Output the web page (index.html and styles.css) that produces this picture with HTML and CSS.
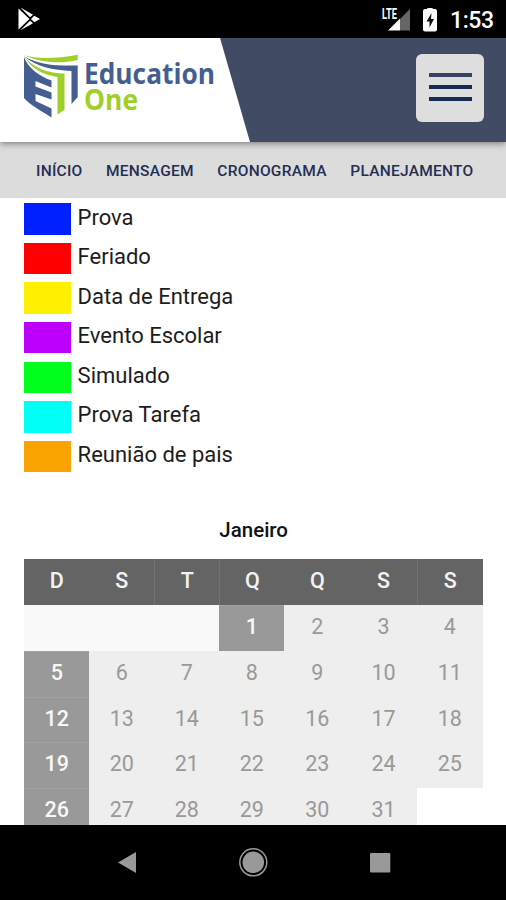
FILE: index.html
```html
<!DOCTYPE html>
<html lang="pt-BR">
<head>
<meta charset="utf-8">
<title>Education One</title>
<link rel="stylesheet" href="styles.css">
</head>
<body>
<div class="screen">
  <div class="status">
    <svg class="play" width="22" height="24" viewBox="0 0 22 24"><path d="M0.5 1.5V22.5L11.5 12ZM2.5 0.5L12 10.3L15 7.8ZM2.5 23.2L12 13.7L15 16.2ZM13 12L16.3 8.7L22 12L16.3 15.3Z" fill="#fff"/></svg>
    <svg class="signals" width="60" height="28" viewBox="0 0 60 28">
      <text class="lte" x="1" y="13" textLength="15" lengthAdjust="spacingAndGlyphs">LTE</text>
      <path d="M29 3V24.500H19V13Z" fill="#666"/><path d="M19 12.500V24.500H7Z" fill="#fff"/>
      <path d="M46 3Q46 2 47.3 2H50.7Q52 2 52 3H54Q56 3 56 5V23.500Q56 25.500 54 25.500H44Q42 25.500 42 23.500V5Q42 3 44 3Z" fill="#fff"/>
      <path d="M50.5 7L45.5 15.5H48.5V21.5L53 13H50Z" fill="#111"/>
    </svg>
    <span class="clock">1:53</span>
  </div>
  <header class="header">
    <svg class="brand" width="250" height="104" viewBox="0 38 250 104">
      <path d="M0 38H220L250 142H0Z" fill="#fff"/>
      <path d="M24 55C35 59 55 59 77.7 54.7V60C61 64 40 63 24 55Z" fill="#a0cf2c"/>
      <path d="M24 56C38 65 57 66 77.7 65.5V97L71.5 104V71C53 70 36 67 24 56Z" fill="#455e91"/>
      <path d="M24 56C34 69 49 73 64.5 73.5V110L57.5 114.5V77C44 75 31 69 24 56Z" fill="#a0cf2c"/>
      <path d="M24 57C28 68 39 76 51.5 80.5V87.5L35.5 81V86.5L51.5 92.5V99.500L35.5 94V101L51.5 108.5V117.5C40 110 30 105 24 98Z" fill="#455e91"/>
      <text class="word blue" x="84" y="83.7" textLength="131" lengthAdjust="spacingAndGlyphs">Education</text>
      <text class="word green" x="84" y="109.5" textLength="54" lengthAdjust="spacingAndGlyphs">One</text>
    </svg>
    <div class="menu"><i></i><i></i><i></i></div>
  </header>
  <nav class="tabs"><span>INÍCIO</span><span>MENSAGEM</span><span>CRONOGRAMA</span><span>PLANEJAMENTO</span></nav>
  <main class="content">
    <ul class="legend">
      <li><i class="c1"></i>Prova</li>
      <li><i class="c2"></i>Feriado</li>
      <li><i class="c3"></i>Data de Entrega</li>
      <li><i class="c4"></i>Evento Escolar</li>
      <li><i class="c5"></i>Simulado</li>
      <li><i class="c6"></i>Prova Tarefa</li>
      <li><i class="c7"></i>Reunião de pais</li>
    </ul>
    <h2>Janeiro</h2>
    <div class="calendar">
      <b class="head">D</b><b class="head">S</b><b class="head line">T</b><b class="head line">Q</b><b class="head">Q</b><b class="head">S</b><b class="head line">S</b>
      <span class="blank"></span><b class="off">1</b><span>2</span><span>3</span><span>4</span>
      <b class="off">5</b><span>6</span><span>7</span><span>8</span><span>9</span><span>10</span><span>11</span>
      <b class="off">12</b><span>13</span><span>14</span><span>15</span><span>16</span><span>17</span><span>18</span>
      <b class="off">19</b><span>20</span><span>21</span><span>22</span><span>23</span><span>24</span><span>25</span>
      <b class="off">26</b><span>27</span><span>28</span><span>29</span><span>30</span><span>31</span>
    </div>
  </main>
  <footer class="navbar">
    <svg width="506" height="75" viewBox="0 825 506 75">
      <path d="M118 862.5L136 852V873Z" fill="#999"/>
      <circle cx="253.300" cy="862.300" r="13.500" fill="none" stroke="#999" stroke-width="1.500"/><circle cx="253.300" cy="862.300" r="10.800" fill="#999"/>
      <rect x="370" y="853" width="20.300" height="19.500" rx="1" fill="#999"/>
    </svg>
  </footer>
</div>
</body>
</html>
```
FILE: styles.css
```css
* { box-sizing: border-box; }
body { margin: 0; font-family: Roboto, sans-serif; background: #fff; }
svg { display: block; }
.screen { width: 506px; height: 900px; display: flex; flex-direction: column; overflow: hidden; }
.status { height: 38px; flex: none; background: #000; display: flex; align-items: center; padding: 0 12px 0 18px; }
.signals { margin-left: auto; margin-top: 2px; }
.lte { font: bold 14px Roboto, sans-serif; fill: #fff; }
.clock { width: 44px; margin-left: 9px; margin-top: 3px; color: #fff; font-size: 23px; font-weight: 500; white-space: nowrap; letter-spacing: -0.4px; }
.header { height: 104px; flex: none; background: #414b63; display: flex; justify-content: space-between; position: relative; box-shadow: 0 1px 7px rgba(0, 0, 0, .5); }
.word { font: bold 29px "Open Sans", sans-serif; }
.blue { fill: #455e91; }
.green { fill: #a0cf2c; }
.menu { width: 68px; height: 68px; margin: 15.500px 22px 0 0; border-radius: 6px; background: #dedede; display: flex; flex-direction: column; align-items: center; gap: 8px; padding-top: 19px; }
.menu i { width: 43px; height: 4px; background: #152b52; }
.menu i:first-child { background: #374260; }
.tabs { height: 55.500px; flex: none; background: #dcdcdc; display: flex; gap: 23.500px; padding: 19px 0 0 36px; color: #252e52; font-size: 15.500px; line-height: 20px; font-weight: 500; letter-spacing: .26px; white-space: nowrap; }
.content { flex: 1; min-height: 0; overflow: hidden; padding: 0 23px 0 24.300px; }
.legend { list-style: none; margin: 0; padding: 1px 0 0; font-size: 22px; color: #1c1c1c; letter-spacing: 0; }
.legend li { height: 39.600px; display: flex; line-height: 38.400px; gap: 6.300px; }
.legend i { width: 47px; height: 31.500px; margin-top: 4.700px; }
.c1 { background: #0020ff; }
.c2 { background: #f00; }
.c3 { background: #fff000; }
.c4 { background: #bd00ff; }
.c5 { background: #00ff1c; }
.c6 { background: #00fff4; }
.c7 { background: #faa200; }
h2 { margin: 39px 0 0; height: 44.200px; line-height: 30px; font-size: 20.500px; font-weight: 500; color: #111; text-align: center; }
.calendar { display: grid; grid-template-columns: 65px 65px 65px 65px 66px 66.400px 66.300px; grid-auto-rows: 45.900px; text-align: center; font-size: 21.500px; line-height: 43px; }
.calendar span { background: #eee; color: #999; }
.calendar b { font-weight: 500; color: #fff; }
.calendar .head { background: #646464; color: #f3f3f3; }
.calendar .line { border-left: 1px solid #727272; }
.calendar .blank { grid-column: span 3; background: #f9f9f9; }
.calendar .off { background: #999; color: #f8f8f8; border-top: 1px solid #a2a2a2; line-height: 41px; }
.navbar { height: 75px; flex: none; background: #000; }
```
